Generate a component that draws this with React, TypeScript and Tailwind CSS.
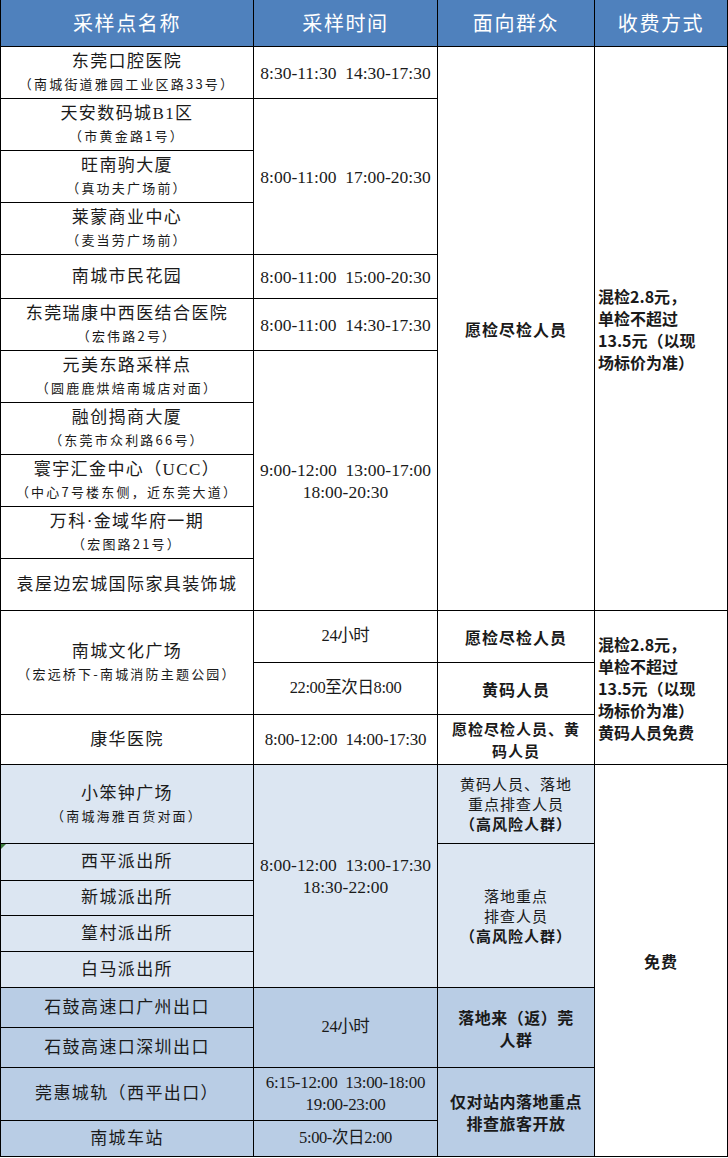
import React from "react"

const cell = "flex flex-col items-center justify-center text-center text-[#1a1a1a]"
const serif = "font-['Liberation_Serif','Noto_Sans_CJK_SC',serif]"
const sans = "font-['Noto_Sans_CJK_SC',sans-serif]"

function Name({ title, sub }: { title: string; sub?: string }) {
  return (
    <>
      <div className={`${serif} text-[17px] leading-[22px] tracking-[1.4px]`}>{title}</div>
      {sub && <div className={`${sans} text-[13px] leading-[20px] tracking-[2.2px] mt-[1px]`}>{sub}</div>}
    </>
  )
}

function Time({ lines }: { lines: string[] }) {
  return (
    <div className={`${serif} text-[17.5px] leading-[22px] whitespace-pre`}>
      {lines.map((l) => (
        <div key={l}>{l}</div>
      ))}
    </div>
  )
}

export default function App() {
  return (
    <div className="w-[728px] bg-white">
      <div
        className={`grid bg-black gap-px px-px pb-px grid-cols-[252px_183px_156px_132px] grid-rows-[46px_51px_51px_51px_51px_43px_51px_51px_51px_51px_51px_51px_51px_51px_49px_78px_36px_34px_35px_35px_39px_39px_52px_35px] ${sans}`}
      >
        {/* header */}
        {["采样点名称", "采样时间", "面向群众", "收费方式"].map((h) => (
          <div key={h} className="flex items-center justify-center bg-[#4f81bd] text-white text-[20px] tracking-[1.6px]">
            {h}
          </div>
        ))}

        {/* column 1 */}
        <div className={`${cell} bg-white col-start-1 row-start-2`}><Name title="东莞口腔医院" sub="（南城街道雅园工业区路33号）" /></div>
        <div className={`${cell} bg-white col-start-1 row-start-3`}><Name title="天安数码城B1区" sub="（市黄金路1号）" /></div>
        <div className={`${cell} bg-white col-start-1 row-start-4`}><Name title="旺南驹大厦" sub="（真功夫广场前）" /></div>
        <div className={`${cell} bg-white col-start-1 row-start-5`}><Name title="莱蒙商业中心" sub="（麦当劳广场前）" /></div>
        <div className={`${cell} bg-white col-start-1 row-start-6`}><Name title="南城市民花园" /></div>
        <div className={`${cell} bg-white col-start-1 row-start-7`}><Name title="东莞瑞康中西医结合医院" sub="（宏伟路2号）" /></div>
        <div className={`${cell} bg-white col-start-1 row-start-8`}><Name title="元美东路采样点" sub="（圆鹿鹿烘焙南城店对面）" /></div>
        <div className={`${cell} bg-white col-start-1 row-start-9`}><Name title="融创揭商大厦" sub="（东莞市众利路66号）" /></div>
        <div className={`${cell} bg-white col-start-1 row-start-10`}><Name title="寰宇汇金中心（UCC）" sub="（中心7号楼东侧，近东莞大道）" /></div>
        <div className={`${cell} bg-white col-start-1 row-start-11`}><Name title="万科·金域华府一期" sub="（宏图路21号）" /></div>
        <div className={`${cell} bg-white col-start-1 row-start-12`}><Name title="袁屋边宏城国际家具装饰城" /></div>
        <div className={`${cell} bg-white col-start-1 row-start-13 row-span-2`}><Name title="南城文化广场" sub="（宏远桥下-南城消防主题公园）" /></div>
        <div className={`${cell} bg-white col-start-1 row-start-15`}><Name title="康华医院" /></div>
        <div className={`${cell} bg-[#dce6f2] col-start-1 row-start-16`}><Name title="小笨钟广场" sub="（南城海雅百货对面）" /></div>
        <div className={`${cell} bg-[#dce6f2] col-start-1 row-start-17 relative`}>
          <Name title="西平派出所" />
          <span className="absolute left-0 top-0 w-0 h-0 border-t-[5px] border-r-[5px] border-t-[#3c7a3c] border-r-transparent" />
        </div>
        <div className={`${cell} bg-[#dce6f2] col-start-1 row-start-18`}><Name title="新城派出所" /></div>
        <div className={`${cell} bg-[#dce6f2] col-start-1 row-start-19`}><Name title="篁村派出所" /></div>
        <div className={`${cell} bg-[#dce6f2] col-start-1 row-start-20`}><Name title="白马派出所" /></div>
        <div className={`${cell} bg-[#b9cde5] col-start-1 row-start-21`}><Name title="石鼓高速口广州出口" /></div>
        <div className={`${cell} bg-[#b9cde5] col-start-1 row-start-22`}><Name title="石鼓高速口深圳出口" /></div>
        <div className={`${cell} bg-[#b9cde5] col-start-1 row-start-23`}><Name title="莞惠城轨（西平出口）" /></div>
        <div className={`${cell} bg-[#b9cde5] col-start-1 row-start-24`}><Name title="南城车站" /></div>

        {/* column 2 */}
        <div className={`${cell} bg-white col-start-2 row-start-2`}><Time lines={["8:30-11:30  14:30-17:30"]} /></div>
        <div className={`${cell} bg-white col-start-2 row-start-3 row-span-3`}><Time lines={["8:00-11:00  17:00-20:30"]} /></div>
        <div className={`${cell} bg-white col-start-2 row-start-6`}><Time lines={["8:00-11:00  15:00-20:30"]} /></div>
        <div className={`${cell} bg-white col-start-2 row-start-7`}><Time lines={["8:00-11:00  14:30-17:30"]} /></div>
        <div className={`${cell} bg-white col-start-2 row-start-8 row-span-5`}><Time lines={["9:00-12:00  13:00-17:00", "18:00-20:30"]} /></div>
        <div className={`${cell} bg-white col-start-2 row-start-13`}><div className={`${serif} text-[16.5px] tracking-[-0.4px]`}>24小时</div></div>
        <div className={`${cell} bg-white col-start-2 row-start-14`}><div className={`${serif} text-[16.5px] tracking-[-0.4px]`}>22:00至次日8:00</div></div>
        <div className={`${cell} bg-white col-start-2 row-start-15`}><div className={`${serif} text-[17px] tracking-[-0.2px] whitespace-pre`}>8:00-12:00  14:00-17:30</div></div>
        <div className={`${cell} bg-[#dce6f2] col-start-2 row-start-16 row-span-5`}><Time lines={["8:00-12:00  13:00-17:30", "18:30-22:00"]} /></div>
        <div className={`${cell} bg-[#b9cde5] col-start-2 row-start-21 row-span-2`}><div className={`${serif} text-[16.5px] tracking-[-0.4px]`}>24小时</div></div>
        <div className={`${cell} bg-[#b9cde5] col-start-2 row-start-23`}>
          <div className={`${serif} text-[17px] leading-[22px] tracking-[-0.3px] whitespace-pre`}>
            <div>6:15-12:00  13:00-18:00</div>
            <div>19:00-23:00</div>
          </div>
        </div>
        <div className={`${cell} bg-[#b9cde5] col-start-2 row-start-24`}><div className={`${serif} text-[16.5px] tracking-[-0.4px]`}>5:00-次日2:00</div></div>

        {/* column 3 */}
        <div className={`${cell} bg-white col-start-3 row-start-2 row-span-11 font-bold text-[16px] tracking-[1px]`}>愿检尽检人员</div>
        <div className={`${cell} bg-white col-start-3 row-start-13 font-bold text-[16px] tracking-[1px]`}>愿检尽检人员</div>
        <div className={`${cell} bg-white col-start-3 row-start-14 font-bold text-[16px] tracking-[1px]`}>黄码人员</div>
        <div className={`${cell} bg-white col-start-3 row-start-15 font-bold text-[15px] leading-[22px] tracking-[1px]`}>
          <div>愿检尽检人员、黄</div>
          <div>码人员</div>
        </div>
        <div className={`${cell} bg-[#dce6f2] col-start-3 row-start-16 text-[15px] leading-[20px] tracking-[1px]`}>
          <div>黄码人员、落地</div>
          <div>重点排查人员</div>
          <div className="font-bold">（高风险人群）</div>
        </div>
        <div className={`${cell} bg-[#dce6f2] col-start-3 row-start-17 row-span-4 text-[15px] leading-[20px] tracking-[1px]`}>
          <div>落地重点</div>
          <div>排查人员</div>
          <div className="font-bold">（高风险人群）</div>
        </div>
        <div className={`${cell} bg-[#b9cde5] col-start-3 row-start-21 row-span-2 font-bold text-[16px] leading-[22px] tracking-[0.5px]`}>
          <div>落地来（返）莞</div>
          <div>人群</div>
        </div>
        <div className={`${cell} bg-[#b9cde5] col-start-3 row-start-23 row-span-2 font-bold text-[16px] leading-[22px] tracking-[0.5px]`}>
          <div>仅对站内落地重点</div>
          <div>排查旅客开放</div>
        </div>

        {/* column 4 */}
        <div className="flex flex-col justify-center bg-white col-start-4 row-start-2 row-span-11 pl-[3px] font-bold text-[16px] leading-[22px] text-[#1a1a1a]">
          <div>混检2.8元，</div>
          <div>单检不超过</div>
          <div>13.5元（以现</div>
          <div>场标价为准）</div>
        </div>
        <div className="flex flex-col justify-center bg-white col-start-4 row-start-13 row-span-3 pl-[3px] font-bold text-[16px] leading-[22px] text-[#1a1a1a]">
          <div>混检2.8元，</div>
          <div>单检不超过</div>
          <div>13.5元（以现</div>
          <div>场标价为准）</div>
          <div>黄码人员免费</div>
        </div>
        <div className={`${cell} bg-white col-start-4 row-start-16 row-span-9 font-bold text-[16px] tracking-[1px]`}>免费</div>
      </div>
    </div>
  )
}
